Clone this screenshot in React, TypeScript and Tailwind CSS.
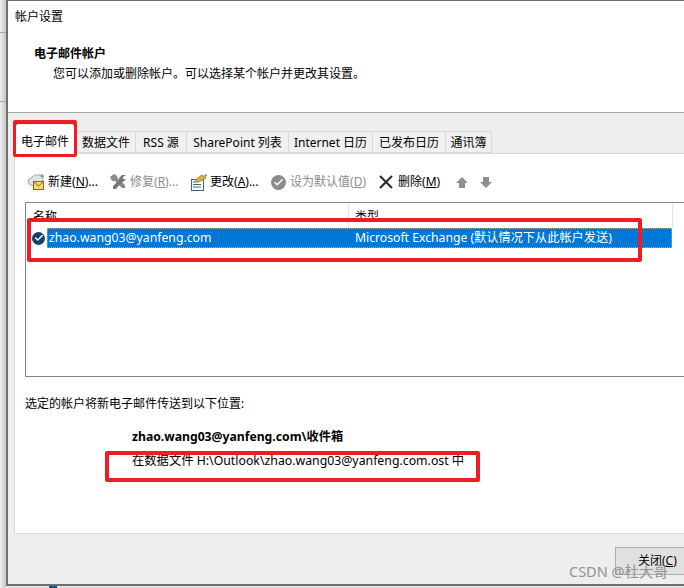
import { Check } from 'lucide-react'

const tabs = [
  { label: '数据文件', w: 'w-[59px]' },
  { label: 'RSS 源', w: 'w-[51px]' },
  { label: 'SharePoint 列表', w: 'w-[102px]' },
  { label: 'Internet 日历', w: 'w-[84px]' },
  { label: '已发布日历', w: 'w-[73px]' },
  { label: '通讯簿', w: 'w-[46px]' },
]

function MailIcon() {
  return (
    <svg width="18" height="18" viewBox="0 0 18 18">
      <path d="M1 7 L8 2 L16 2 L16 8 L8 14 L2 11 Z" fill="#dfe4e8" stroke="#9aa5ae" strokeWidth="1" />
      <circle cx="15" cy="3" r="1.6" fill="#63c14f" />
      <rect x="6.5" y="8.5" width="10" height="8" fill="#f2d675" stroke="#8a6d1f" strokeWidth="1" />
      <path d="M6.5 8.5 L11.5 13 L16.5 8.5" fill="none" stroke="#8a6d1f" strokeWidth="1" />
    </svg>
  )
}

function WrenchIcon() {
  return (
    <svg width="17" height="16" viewBox="0 0 17 16">
      <path d="M0 3 L4 0 L7 2 L8 5 L15 11 L15 14 L12 14 L5 7 L2 7 Z" fill="#8a8a8a" />
      <path d="M16 1 L12 1 L9 4 L9 6 L3 12 L3 15 L6 15 L11 9 L13 8 L16 5 L13 5 L13 3 Z" fill="#777777" />
    </svg>
  )
}

function ChangeIcon() {
  return (
    <svg width="17" height="17" viewBox="0 0 17 17">
      <rect x="1.5" y="5.5" width="12" height="11" fill="#fff" stroke="#44617e" strokeWidth="1" />
      <path d="M3 8 H8 M3 10.5 H11 M3 13 H11" stroke="#44617e" strokeWidth="1" />
      <path d="M5 6 L12 1 L16 4 L9 8 Z" fill="#e2b23c" stroke="#8e6d16" strokeWidth="0.7" />
      <circle cx="15.5" cy="1.5" r="1.3" fill="#5fb848" />
    </svg>
  )
}

function DeleteIcon() {
  return (
    <svg width="16" height="16" viewBox="0 0 16 16">
      <path d="M2 2 L14 14 M14 2 L2 14" stroke="#2f2f2f" strokeWidth="2.2" />
    </svg>
  )
}

function BlockArrow({ down }: { down?: boolean }) {
  return (
    <svg width="12" height="11" viewBox="0 0 12 11" className={down ? 'rotate-180' : ''}>
      <path d="M6 0 L12 6 L9 6 L9 11 L3 11 L3 6 L0 6 Z" fill="#8f8f8f" />
    </svg>
  )
}

function ToolButton({ icon, label, hot, tail, disabled, w }: { icon: React.ReactNode; label: string; hot: string; tail: string; disabled?: boolean; w: string }) {
  return (
    <div className={`flex items-center gap-[3px] ${w} ${disabled ? 'text-[#8c8c8c]' : 'text-black'}`}>
      <span className="flex w-[18px] justify-center">{icon}</span>
      <span className="whitespace-nowrap">
        {label}(<span className="underline">{hot}</span>){tail}
      </span>
    </div>
  )
}

export default function App() {
  return (
    <div className="relative flex h-[588px] w-[684px] overflow-hidden bg-[#e4e4e4] text-[12px] text-black [font-family:'Noto_Sans','Noto_Sans_CJK_SC',sans-serif]">
      {/* sliver of the window behind */}
      <div className="flex w-[6px] shrink-0 flex-col bg-gradient-to-r from-[#efefef] to-[#c6c6c6]">
        <div className="h-[33px] border-b border-[#a8a8a8]" />
        <div className="h-[69px] border-b border-[#a8a8a8]" />
      </div>

      <div className="flex h-[586px] w-[678px] flex-col border-t border-b-2 border-l-2 border-[#6f6f6f] bg-white">
        <div className="flex h-[111px] shrink-0 flex-col">
          <div className="pt-[7px] pl-[7px] leading-[18px]">帐户设置</div>
          <div className="pt-[19px] pl-[26px] leading-[18px] font-bold">电子邮件帐户</div>
          <div className="pt-[2px] pl-[45px] leading-[18px]">您可以添加或删除帐户。可以选择某个帐户并更改其设置。</div>
        </div>

        <div className="flex min-h-0 flex-1 flex-col border-t border-[#a9a9a9] bg-[#eeeeee]">
          {/* tabs */}
          <div className="flex h-[40px] shrink-0 items-end pl-[8px]">
            <div className="z-10 -mb-px mr-[3px] flex h-[29px] w-[58px] items-center justify-center bg-white pt-[4px]">电子邮件</div>
            {tabs.map((t) => (
              <div key={t.label} className={`flex h-[22px] ${t.w} items-center justify-center border-y border-r border-[#d9d9d9] bg-[#f0f0f0] pt-[2px] whitespace-nowrap first:border-l`}>
                {t.label}
              </div>
            ))}
          </div>

          <div className="ml-[6px] flex h-[381px] shrink-0 flex-col border-t border-b border-l border-[#d9d9d9] bg-white">
            {/* toolbar */}
            <div className="flex h-[48px] shrink-0 items-center pt-[8px] pl-[12px]">
              <ToolButton icon={<MailIcon />} label="新建" hot="N" tail="..." w="w-[82px]" />
              <ToolButton disabled icon={<WrenchIcon />} label="修复" hot="R" tail="..." w="w-[80px]" />
              <ToolButton icon={<ChangeIcon />} label="更改" hot="A" tail="..." w="w-[80px]" />
              <ToolButton disabled icon={<span className="flex size-[15px] items-center justify-center rounded-full bg-[#8c8c8c]"><Check size={11} strokeWidth={3} color="#fff" /></span>} label="设为默认值" hot="D" tail="" w="w-[108px]" />
              <ToolButton icon={<DeleteIcon />} label="删除" hot="M" tail="" w="w-[79px]" />
              <div className="flex gap-[12px]">
                <BlockArrow />
                <BlockArrow down />
              </div>
            </div>

            {/* account list */}
            <div className="ml-[10px] flex h-[175px] shrink-0 flex-col border-t border-b border-l border-[#82878f]">
              <div className="flex h-[25px] shrink-0 items-center">
                <div className="h-full w-[323px] border-r border-[#e5e5e5] pl-[7px] leading-[27px]">名称</div>
                <div className="h-full w-[324px] border-r border-[#e5e5e5] pl-[6px] leading-[27px]">类型</div>
              </div>
              <div className="flex h-[20px] shrink-0 items-center pl-[6px]">
                <span className="mr-[2px] flex size-[13px] shrink-0 items-center justify-center rounded-full bg-[#1d3d66]">
                  <Check size={10} strokeWidth={3.5} color="#fff" />
                </span>
                <div className="flex h-full w-[625px] items-center border border-dotted border-[#e0a050] bg-[#0078d7] pt-px text-white">
                  <span className="w-[307px] pl-px text-[12.25px]">zhao.wang03@yanfeng.com</span>
                  <span className="text-[12.2px]">Microsoft Exchange (默认情况下从此帐户发送)</span>
                </div>
              </div>
            </div>

            <div className="pt-[18px] pl-[10px] leading-[18px]">选定的帐户将新电子邮件传送到以下位置:</div>
            <div className="pt-[15px] pl-[117px] text-[12.2px] leading-[18px] font-bold">zhao.wang03@yanfeng.com\收件箱</div>
            <div className="pt-[6px] pl-[117px] text-[12.3px] leading-[18px]">在数据文件 H:\Outlook\zhao.wang03@yanfeng.com.ost 中</div>
          </div>

          {/* footer */}
          <div className="flex flex-1 items-start justify-end pt-[13px]">
            <div className="flex h-[28px] w-[69px] items-center justify-start border-y border-l border-[#adadad] bg-[#e1e1e1] pl-[22px] whitespace-nowrap">
              关闭(<span className="underline">C</span>)
            </div>
          </div>
        </div>
      </div>

      {/* taskbar bit showing under the dialog */}
      <div className="absolute top-[586px] left-[49px] h-[2px] w-[8px] bg-[#14508c]" />

      {/* red annotation boxes */}
      <div className="absolute top-[120px] left-[13px] h-[37px] w-[64px] rounded-[2px] border-4 border-[#ee1c25]" />
      <div className="absolute top-[218px] left-[27px] h-[44px] w-[615px] rounded-[2px] border-4 border-[#ee1c25]" />
      <div className="absolute top-[451px] left-[105px] h-[31px] w-[375px] rounded-[2px] border-4 border-[#ee1c25]" />

      {/* watermark */}
      <div className="absolute top-[561px] left-[569px] text-[14.5px] whitespace-nowrap text-[#8a8a8a] opacity-90">CSDN @杜大哥</div>
    </div>
  )
}
